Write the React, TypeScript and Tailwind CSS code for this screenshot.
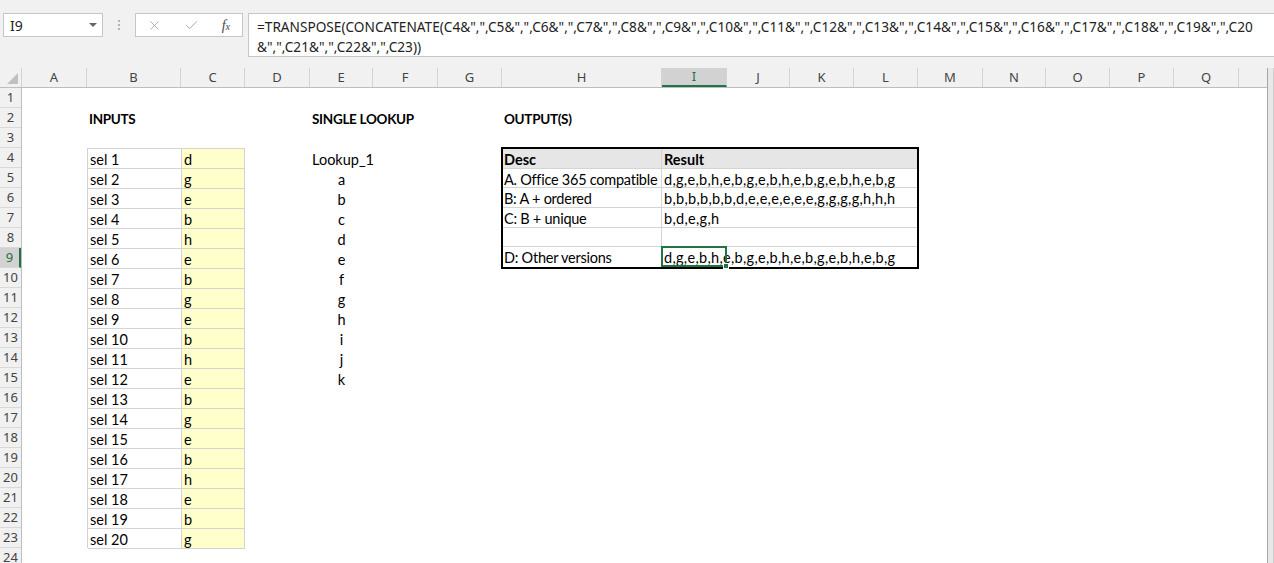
import { X, Check } from 'lucide-react'

const columns = [
  { label: 'A', w: 'w-[65px]' },
  { label: 'B', w: 'w-[94px]' },
  { label: 'C', w: 'w-[64px]' },
  { label: 'D', w: 'w-[65px]' },
  { label: 'E', w: 'w-[63px]' },
  { label: 'F', w: 'w-[65px]' },
  { label: 'G', w: 'w-[64px]' },
  { label: 'H', w: 'w-[160px]' },
  { label: 'I', w: 'w-[65px]' },
  { label: 'J', w: 'w-[63px]' },
  { label: 'K', w: 'w-[64px]' },
  { label: 'L', w: 'w-[64px]' },
  { label: 'M', w: 'w-[65px]' },
  { label: 'N', w: 'w-[63px]' },
  { label: 'O', w: 'w-[64px]' },
  { label: 'P', w: 'w-[64px]' },
  { label: 'Q', w: 'w-[65px]' },
  { label: '', w: 'w-[28px]' },
]

const inputs = ['d', 'g', 'e', 'b', 'h', 'e', 'b', 'g', 'e', 'b', 'h', 'e', 'b', 'g', 'e', 'b', 'h', 'e', 'b', 'g']
const lookups = ['a', 'b', 'c', 'd', 'e', 'f', 'g', 'h', 'i', 'j', 'k']

const outputs = [
  { desc: 'A. Office 365 compatible', result: 'd,g,e,b,h,e,b,g,e,b,h,e,b,g,e,b,h,e,b,g' },
  { desc: 'B: A + ordered', result: 'b,b,b,b,b,b,d,e,e,e,e,e,e,g,g,g,g,h,h,h' },
  { desc: 'C: B + unique', result: 'b,d,e,g,h' },
  { desc: '', result: '' },
]

const formula1 = '=TRANSPOSE(CONCATENATE(C4&",",C5&",",C6&",",C7&",",C8&",",C9&",",C10&",",C11&",",C12&",",C13&",",C14&",",C15&",",C16&",",C17&",",C18&",",C19&",",C20'
const formula2 = '&",",C21&",",C22&",",C23))'

const cellFont = "font-['Lato',sans-serif] text-[14.5px] text-black"
const heading = 'px-[2px] leading-[23px] font-bold text-[13.5px] tracking-[-0.3px] whitespace-nowrap'
const outCell = 'pt-[1px] leading-[19px] whitespace-nowrap min-h-0'

function FormulaBar() {
  return (
    <div className="h-[68px] bg-[#f1f1f1] flex items-start pt-[13px] pl-[3px]">
      <div className="w-[100px] h-[24px] bg-white border border-[#c6c6c6] flex items-center justify-between pl-[6px] pr-[5px]">
        <span className="font-['Noto_Sans',sans-serif] text-[14px] text-[#222]">I9</span>
        <span className="w-0 h-0 border-x-[4px] border-x-transparent border-t-[4px] border-t-[#666]" />
      </div>
      <div className="w-[32px] h-[24px] flex flex-col items-center justify-center gap-[2px]">
        <span className="w-[2px] h-[2px] bg-[#b4b4b4]" />
        <span className="w-[2px] h-[2px] bg-[#b4b4b4]" />
        <span className="w-[2px] h-[2px] bg-[#b4b4b4]" />
      </div>
      <div className="w-[108px] h-[24px] bg-white border border-[#c6c6c6] flex items-center justify-between pl-[11px] pr-[12px]">
        <X size={15} strokeWidth={1.4} className="text-[#a6a6a6]" />
        <Check size={15} strokeWidth={1.6} className="text-[#a6a6a6]" />
        <span className="font-['Liberation_Serif',serif] italic text-[14px] text-[#444]">
          f<span className="text-[10px]">x</span>
        </span>
      </div>
      <div className="ml-[5px] flex-1 h-[44px] bg-white border border-[#c6c6c6] border-r-0 pl-[8px] pt-[3px] font-['Noto_Sans',sans-serif] text-[13.65px] leading-[20px] text-[#222] whitespace-nowrap overflow-hidden">
        <div>{formula1}</div>
        <div>{formula2}</div>
      </div>
    </div>
  )
}

function ColumnHeaders() {
  return (
    <div className="flex h-[20px] bg-[#f1f1f1] border-b border-[#bdbdbd] font-['Noto_Sans',sans-serif] text-[13px] text-[#444]">
      <div className="w-[22px] border-r border-[#d4d4d4] flex items-end justify-end p-[3px]">
        <span className="w-0 h-0 border-l-[11px] border-l-transparent border-b-[11px] border-b-[#c0c0c0]" />
      </div>
      {columns.map((c, i) => (
        <div
          key={i}
          className={`${c.w} shrink-0 flex items-center justify-center ${c.label ? 'border-r border-[#d4d4d4]' : ''} ${c.label === 'I' ? 'bg-[#d2d2d2] text-[#217346] border-b-2 border-b-[#217346]' : ''}`}
        >
          {c.label}
        </div>
      ))}
    </div>
  )
}

function RowHeaders() {
  return (
    <div className="w-[22px] shrink-0 bg-[#f1f1f1] border-r border-[#bdbdbd] font-['Noto_Sans',sans-serif] text-[13px] text-[#444]">
      {Array.from({ length: 24 }, (_, i) => i + 1).map(n => (
        <div
          key={n}
          className={`h-[20px] border-b border-[#d9d9d9] flex items-center justify-center ${n === 9 ? 'bg-[#d2d2d2] text-[#217346] border-r-2 border-r-[#217346]' : ''}`}
        >
          {n}
        </div>
      ))}
    </div>
  )
}

function InputsTable() {
  return (
    <div className="col-start-2 col-span-2 row-start-4 row-span-20 border-l border-t border-[#d4d4d4] grid grid-cols-[94px_1fr] auto-rows-[20px]">
      {inputs.map((v, i) => (
        <div key={i} className="contents">
          <div className="border-r border-b border-[#d4d4d4] px-[2px] leading-[21px] bg-white">sel {i + 1}</div>
          <div className="border-r border-b border-[#d4d4d4] px-[2px] leading-[21px] bg-[#ffffcc]">{v}</div>
        </div>
      ))}
    </div>
  )
}

function OutputTable() {
  return (
    <div className="col-start-8 col-span-5 row-start-4 row-span-6 -m-[1px] border-2 border-black grid grid-cols-[159px_1fr] grid-rows-[repeat(6,minmax(0,1fr))]">
      <div className={`bg-[#e7e6e6] border-r border-b border-[#d4d4d4] px-[1px] font-bold ${outCell}`}>Desc</div>
      <div className={`bg-[#e7e6e6] border-b border-[#d4d4d4] px-[2px] font-bold ${outCell}`}>Result</div>
      {outputs.map((o, i) => (
        <div key={i} className="contents">
          <div className={`border-r border-b border-[#d4d4d4] px-[1px] tracking-[-0.25px] ${outCell}`}>{o.desc}</div>
          <div className={`border-b border-[#d4d4d4] px-[2px] tracking-[0.3px] ${outCell}`}>{o.result}</div>
        </div>
      ))}
      <div className={`border-r border-[#d4d4d4] px-[1px] tracking-[-0.25px] ${outCell}`}>D: Other versions</div>
      <div className={`relative px-[2px] tracking-[0.3px] ${outCell}`}>
        d,g,e,b,h,e,b,g,e,b,h,e,b,g,e,b,h,e,b,g
        <div className="absolute left-[-1px] top-[-1px] w-[66px] h-[21px] border-2 border-[#217346]">
          <span className="absolute -right-[4px] -bottom-[4px] w-[6px] h-[6px] bg-[#217346] border border-white" />
        </div>
      </div>
    </div>
  )
}

export default function App() {
  return (
    <div className="w-[1274px] h-[563px] overflow-hidden bg-white">
      <FormulaBar />
      <div className="flex">
        <div className="w-[1267px] shrink-0">
          <ColumnHeaders />
          <div className="flex">
            <RowHeaders />
            <div className={`grid grid-cols-[65px_94px_64px_65px_63px_65px_64px_160px_65px_63px_64px_64px_65px_63px_64px_64px_65px_28px] grid-rows-[repeat(24,20px)] ${cellFont}`}>
              <div className={`col-start-2 row-start-2 ${heading}`}>INPUTS</div>
              <div className={`col-start-5 col-span-2 row-start-2 ${heading}`}>SINGLE LOOKUP</div>
              <div className={`col-start-8 row-start-2 ${heading}`}>OUTPUT(S)</div>
              <InputsTable />
              <div className="col-start-5 row-start-4 px-[2px] leading-[23px]">Lookup_1</div>
              <div className="col-start-5 row-start-5 row-span-11 flex flex-col">
                {lookups.map(l => (
                  <div key={l} className="h-[20px] leading-[23px] text-center">{l}</div>
                ))}
              </div>
              <OutputTable />
            </div>
          </div>
        </div>
        <div className="flex-1 border-l border-[#a6a6a6] bg-[#e8e8e8] border-r border-r-[#cfcfcf]" />
      </div>
    </div>
  )
}
